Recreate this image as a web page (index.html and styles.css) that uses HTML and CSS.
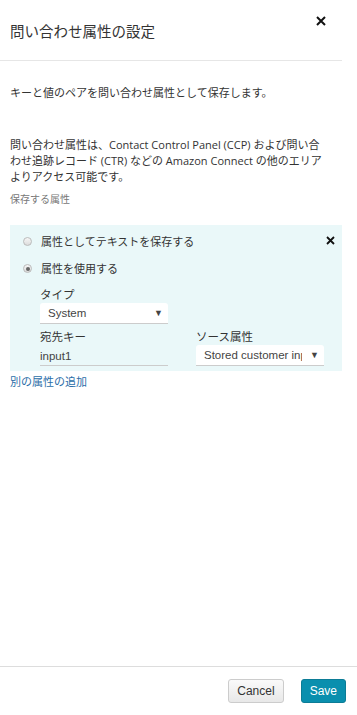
FILE: index.html
```html
<!DOCTYPE html>
<html lang="ja">

<head>
  <meta charset="UTF-8">
  <meta name="viewport" content="width=device-width, initial-scale=1.0">
  <title>問い合わせ属性の設定</title>
  <link rel="stylesheet" href="styles.css">
</head>

<body>
  <div id="dialog">
    <div class="main">
      <div class="header">
        <h1 class="title">問い合わせ属性の設定</h1>
        <a href="###" class="close">
          <svg width="10" height="10" viewBox="0 0 10 10"><path d="M1 1L9 9M9 1L1 9" stroke="#111" stroke-width="2" /></svg>
        </a>
      </div>

      <p class="intro">キーと値のペアを問い合わせ属性として保存します。</p>
      <p class="desc">問い合わせ属性は、Contact Control Panel (CCP) および問い合<br>わせ追跡レコード (CTR) などの Amazon Connect の他のエリア<br>よりアクセス可能です。</p>
      <div class="caption">保存する属性</div>

      <div class="attr">
        <a href="###" class="remove">
          <svg width="9" height="9" viewBox="0 0 9 9"><path d="M1 1L8 8M8 1L1 8" stroke="#111" stroke-width="1.8" /></svg>
        </a>
        <label class="radio"><span class="dot"></span>属性としてテキストを保存する</label>
        <label class="radio"><span class="dot checked"></span>属性を使用する</label>
        <div class="fields">
          <div class="field">
            <div class="label">タイプ</div>
            <div class="select">System<span class="arrow">&#9660;</span></div>
          </div>
          <div class="row">
            <div class="field">
              <div class="label">宛先キー</div>
              <div class="input">input1</div>
            </div>
            <div class="field">
              <div class="label">ソース属性</div>
              <div class="select"><span class="clip">Stored customer input</span><span class="arrow">&#9660;</span></div>
            </div>
          </div>
        </div>
      </div>
      <a href="###" class="add">別の属性の追加</a>
    </div>

    <div class="footer">
      <a href="###" class="btn cancel">Cancel</a>
      <a href="###" class="btn save">Save</a>
    </div>
  </div>
</body>

</html>
```

FILE: styles.css
```css
* {
  margin: 0;
  padding: 0;
  box-sizing: border-box;
}

body {
  font-family: "Liberation Sans", "Noto Sans CJK JP", sans-serif;
  color: #333;
  background: #fff;
}

a {
  text-decoration: none;
}

#dialog {
  width: 357px;
  height: 715px;
  display: flex;
  flex-direction: column;
}

.main {
  width: 342px;
  flex: 1;
}

.header {
  height: 61px;
  border-bottom: 1px solid #e6e6e6;
  display: flex;
  justify-content: space-between;
  padding: 0 16px 0 10px;
}

.title {
  font-size: 14.5px;
  font-weight: normal;
  line-height: 20px;
  margin-top: 22px;
  color: #333;
}

.close {
  display: block;
  margin-top: 16px;
  height: 10px;
}

.close svg,
.remove svg {
  display: block;
}

.intro {
  font-size: 11px;
  line-height: 16px;
  padding: 24px 10px 0;
}

.desc {
  font-family: "Open Sans", "Noto Sans CJK JP", sans-serif;
  font-size: 11px;
  line-height: 16px;
  padding: 36px 4px 0 10px;
}

.caption {
  font-size: 10px;
  color: #777;
  line-height: 14px;
  padding: 8px 10px 0;
}

.attr {
  position: relative;
  margin: 18px 0 0 10px;
  background: #eaf8f9;
  padding: 3px 0 5px 13px;
}

.remove {
  position: absolute;
  right: 7px;
  top: 11px;
}

.radio {
  display: flex;
  align-items: center;
  gap: 9px;
  font-size: 11px;
  line-height: 16px;
  height: 27px;
}

.dot {
  width: 9px;
  height: 9px;
  border-radius: 50%;
  border: 1px solid #bbb;
  background: linear-gradient(#f6f6f6, #dcdcdc);
  position: relative;
}

.dot.checked::after {
  content: "";
  position: absolute;
  left: 1.5px;
  top: 1.5px;
  width: 4px;
  height: 4px;
  border-radius: 50%;
  background: #666;
}

.fields {
  padding-left: 17px;
  width: 301px;
}

.row {
  display: flex;
  gap: 28px;
}

.field {
  width: 128px;
}

.label {
  font-size: 11.5px;
  line-height: 14px;
  margin: 6px 0 1px;
}

.select {
  background: #fff;
  height: 21px;
  border-radius: 3px 3px 0 0;
  border-bottom: 1px solid #ccc;
  font-size: 11.5px;
  line-height: 20px;
  padding: 0 5px 0 8px;
  display: flex;
  justify-content: space-between;
  color: #444;
}

.clip {
  width: 98px;
  overflow: hidden;
  white-space: nowrap;
}

.arrow {
  font-size: 9px;
  color: #444;
}

.input {
  height: 21px;
  border-bottom: 1px solid #ccc;
  font-size: 11.5px;
  line-height: 22px;
  color: #444;
}

.add {
  display: block;
  font-size: 11px;
  color: #2b6ea8;
  line-height: 16px;
  padding: 3px 10px 0;
}

.footer {
  height: 49px;
  border-top: 1px solid #ddd;
  display: flex;
  justify-content: flex-end;
  align-items: flex-start;
  gap: 17px;
  padding: 12px 11px 0 0;
}

.btn {
  height: 24px;
  line-height: 22px;
  font-size: 12px;
  border-radius: 3px;
  padding: 0 8px;
}

.cancel {
  color: #333;
  border: 1px solid #ccc;
  background: linear-gradient(#fafafa, #e8e8e8);
}

.save {
  color: #fff;
  border: 1px solid #0c7c96;
  background: #0a8fae;
}
```
